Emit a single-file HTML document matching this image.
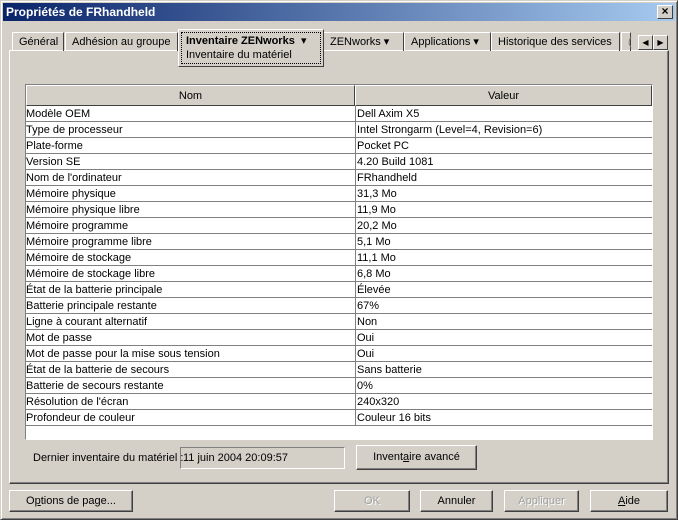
<!DOCTYPE html>
<html><head><meta charset="utf-8"><style>
*{box-sizing:border-box;margin:0;padding:0}
body{width:678px;height:520px;background:#d4d0c8;font-family:"Liberation Sans",sans-serif;font-size:11px;color:#000;position:relative;overflow:hidden}
.abs{position:absolute}
.win{left:0;top:0;width:678px;height:520px;border:1px solid;border-color:#d4d0c8 #404040 #404040 #d4d0c8;box-shadow:inset 1px 1px #fff,inset -1px -1px #808080}
.title{left:3px;top:3px;width:672px;height:18px;background:linear-gradient(to right,#0a246a,#a6caf0);color:#fff;font-weight:bold;font-size:12px;line-height:18px;padding-left:3px}
.xbtn{right:5px;top:5px;width:16px;height:14px;background:#d4d0c8;border:1px solid;border-color:#fff #404040 #404040 #fff;color:#000;font-size:12px;line-height:11px;text-align:center;font-weight:bold}
.tab{top:32px;height:19px;border:1px solid;border-color:#fff #404040 transparent #fff;border-bottom:none;line-height:18px;padding-left:6px;white-space:nowrap}
.panel{left:9px;top:50px;width:660px;height:434px;border:1px solid;border-color:#fff #404040 #404040 #fff;box-shadow:inset -1px -1px #808080}
.tbl{left:25px;top:84px;width:628px;height:356px;background:#fff;border:1px solid;border-color:#808080 #fff #fff #808080}
.hd{top:0;height:21px;background:#d4d0c8;border:1px solid;border-color:#fff #404040 #404040 #fff;text-align:center;line-height:20px}
.row{position:absolute;left:0;width:626px;height:16px;border-bottom:1px solid #808080;line-height:16px}
.row span{position:absolute;top:0}
.c1{left:0}.c2{left:329px;border-left:1px solid #808080;padding-left:1px;height:16px}
.btn{height:22px;border:1px solid;border-color:#fff #404040 #404040 #fff;box-shadow:inset -1px -1px #808080;text-align:center;line-height:20px;background:#d4d0c8}
.dis{color:#a0a0a0;text-shadow:1px 1px #fff}
.arr{top:35px;width:15px;height:15px;border:1px solid;border-color:#fff #404040 #404040 #fff;font-size:8px;text-align:center;line-height:13px}
</style></head><body>
<div class="abs win"></div>
<div class="abs title">Propriétés de FRhandheld</div>
<div class="abs xbtn">×</div>

<div class="abs panel"></div>
<div class="abs tab" style="left:12px;width:52px">Général</div>
<div class="abs tab" style="left:65px;width:113px">Adhésion au groupe</div>
<div class="abs tab" style="left:323px;width:81px">ZENworks ▾</div>
<div class="abs tab" style="left:404px;width:87px">Applications ▾</div>
<div class="abs tab" style="left:491px;width:129px">Historique des services</div>
<div class="abs tab" style="left:621px;width:10px;color:#808080">(</div>
<div class="abs" style="left:178px;top:29px;width:146px;height:38px;background:#d4d0c8;border:1px solid;border-color:#fff #404040 #404040 #fff">
 <div style="margin:2px;height:32px;border:1px dotted #000;padding-left:4px;padding-top:1px;line-height:14px"><b>Inventaire ZENworks</b>&nbsp;&nbsp;▾<br>Inventaire du matériel</div>
</div>
<div class="abs arr" style="left:638px">◀</div>
<div class="abs arr" style="left:653px">▶</div>

<div class="abs tbl">
 <div class="abs hd" style="left:0;width:329px">Nom</div>
 <div class="abs hd" style="left:329px;width:297px">Valeur</div>
 <div style="position:absolute;left:0;top:21px">
 <div class="row" style="top:0"><span class="c1">Modèle OEM</span><span class="c2">Dell Axim X5</span></div>
 <div class="row" style="top:16px"><span class="c1">Type de processeur</span><span class="c2">Intel Strongarm (Level=4, Revision=6)</span></div>
 <div class="row" style="top:32px"><span class="c1">Plate-forme</span><span class="c2">Pocket PC</span></div>
 <div class="row" style="top:48px"><span class="c1">Version SE</span><span class="c2">4.20 Build 1081</span></div>
 <div class="row" style="top:64px"><span class="c1">Nom de l'ordinateur</span><span class="c2">FRhandheld</span></div>
 <div class="row" style="top:80px"><span class="c1">Mémoire physique</span><span class="c2">31,3 Mo</span></div>
 <div class="row" style="top:96px"><span class="c1">Mémoire physique libre</span><span class="c2">11,9 Mo</span></div>
 <div class="row" style="top:112px"><span class="c1">Mémoire programme</span><span class="c2">20,2 Mo</span></div>
 <div class="row" style="top:128px"><span class="c1">Mémoire programme libre</span><span class="c2">5,1 Mo</span></div>
 <div class="row" style="top:144px"><span class="c1">Mémoire de stockage</span><span class="c2">11,1 Mo</span></div>
 <div class="row" style="top:160px"><span class="c1">Mémoire de stockage libre</span><span class="c2">6,8 Mo</span></div>
 <div class="row" style="top:176px"><span class="c1">État de la batterie principale</span><span class="c2">Élevée</span></div>
 <div class="row" style="top:192px"><span class="c1">Batterie principale restante</span><span class="c2">67%</span></div>
 <div class="row" style="top:208px"><span class="c1">Ligne à courant alternatif</span><span class="c2">Non</span></div>
 <div class="row" style="top:224px"><span class="c1">Mot de passe</span><span class="c2">Oui</span></div>
 <div class="row" style="top:240px"><span class="c1">Mot de passe pour la mise sous tension</span><span class="c2">Oui</span></div>
 <div class="row" style="top:256px"><span class="c1">État de la batterie de secours</span><span class="c2">Sans batterie</span></div>
 <div class="row" style="top:272px"><span class="c1">Batterie de secours restante</span><span class="c2">0%</span></div>
 <div class="row" style="top:288px"><span class="c1">Résolution de l'écran</span><span class="c2">240x320</span></div>
 <div class="row" style="top:304px"><span class="c1">Profondeur de couleur</span><span class="c2">Couleur 16 bits</span></div>
 </div>
</div>

<div class="abs" style="left:33px;top:452px">Dernier inventaire du matériel :</div>
<div class="abs" style="left:180px;top:447px;width:165px;height:22px;border:1px solid;border-color:#808080 #fff #fff #808080;padding-left:2px;line-height:21px">11 juin 2004 20:09:57</div>
<div class="abs btn" style="left:356px;top:445px;width:121px;height:25px;line-height:23px">Invent<u>a</u>ire avancé</div>

<div class="abs btn" style="left:9px;top:490px;width:124px">O<u>p</u>tions de page...</div>
<div class="abs btn dis" style="left:334px;top:490px;width:76px">OK</div>
<div class="abs btn" style="left:420px;top:490px;width:73px">Annuler</div>
<div class="abs btn dis" style="left:504px;top:490px;width:75px">Appliquer</div>
<div class="abs btn" style="left:590px;top:490px;width:78px"><u>A</u>ide</div>
</body></html>
